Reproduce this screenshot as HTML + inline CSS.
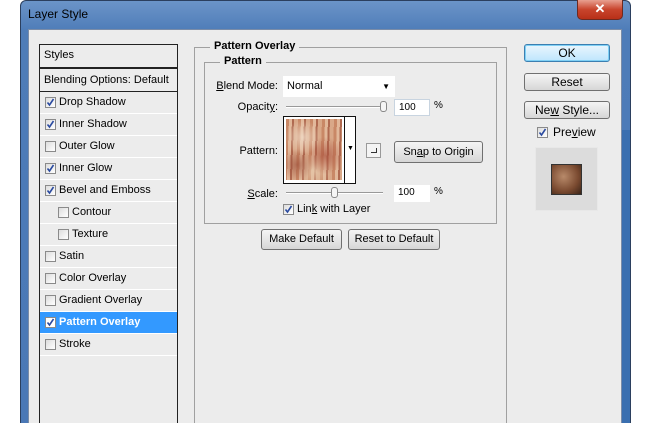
<!DOCTYPE html>
<html><head><style>
*{box-sizing:border-box;margin:0;padding:0}
html,body{width:650px;height:423px;overflow:hidden}
body{background:#fff;position:relative;font-family:"Liberation Sans",sans-serif;font-size:11px;color:#000;white-space:nowrap}
.a{position:absolute}
.frame{left:20px;top:0;width:611px;height:423px;background:linear-gradient(#6b94c8,#4e7cb8 30px,#4a78b6);border-radius:6px 6px 0 0;border:1px solid #2b3f5e;border-bottom:none}
.inner{left:28px;top:29px;width:594px;height:394px;background:#ececec;border:1px solid #7a8ca8;border-bottom:none}
.title{left:28px;top:7px;font-size:12px;color:#000}
.close{left:577px;top:0;width:46px;height:20px;background:linear-gradient(#e8a090,#c8442c 50%,#b83018);border:1px solid #6d2a20;border-top:none;border-radius:0 0 5px 5px;color:#fff;font-weight:bold;text-align:center;font-size:13px;line-height:18px}
.panel{left:39px;top:44px;width:139px;height:379px;border:1px solid #222;border-bottom:none;background:#ececec}
.row{position:absolute;left:0;width:137px;height:22px;border-bottom:1px solid #fff;line-height:21px;padding-left:19px}
.cb{position:absolute;left:5px;top:5px;width:11px;height:11px;border:1px solid #8a8a8a;background:linear-gradient(135deg,#ddd,#fff)}
.cb svg{position:absolute;left:0;top:0;display:block}
.btn{position:absolute;border:1px solid #707070;border-radius:3px;background:linear-gradient(#f4f4f4,#e6e6e6 50%,#d6d6d6);text-align:center;font-size:11px}
.fs{position:absolute;border:1px solid #a0a0a0}
.lg{position:absolute;background:#ececec;font-weight:bold;padding:0 4px;font-size:11px}
.lbl{position:absolute;text-align:right;font-size:11px}
.inp{position:absolute;background:#fff;border:1px solid #c8d4e0;padding-left:4px;font-size:10px;line-height:15px}
.sl{position:absolute;height:2px;border-top:1px solid #999;border-bottom:1px solid #fff}
.th{position:absolute;width:7px;height:11px;border:1px solid #888;border-radius:3px;background:#f5f5f5}
</style></head><body>
<svg width="0" height="0" style="position:absolute"><defs><symbol id="ck" viewBox="0 0 9 9"><path d="M1.5 4.5 L3.5 7 L7.5 1" fill="none" stroke="#2a4aa0" stroke-width="1.6"/></symbol></defs></svg>
<div class="a frame"></div>
<div class="a title">Layer Style</div>
<div class="a close">✕</div>
<div class="a inner"></div>
<div class="a panel">
 <div class="row" style="top:0;padding-left:4px;border-bottom:2px solid #222;height:24px">Styles</div>
 <div class="row" style="top:25px;padding-left:4px;border-bottom:1px solid #222">Blending Options: Default</div>
 <div class="row" style="top:47px"><span class="cb"><svg width="9" height="9"><use href="#ck"/></svg></span>Drop Shadow</div>
 <div class="row" style="top:69px"><span class="cb"><svg width="9" height="9"><use href="#ck"/></svg></span>Inner Shadow</div>
 <div class="row" style="top:91px"><span class="cb"></span>Outer Glow</div>
 <div class="row" style="top:113px"><span class="cb"><svg width="9" height="9"><use href="#ck"/></svg></span>Inner Glow</div>
 <div class="row" style="top:135px"><span class="cb"><svg width="9" height="9"><use href="#ck"/></svg></span>Bevel and Emboss</div>
 <div class="row" style="top:157px;padding-left:32px"><span class="cb" style="left:18px"></span>Contour</div>
 <div class="row" style="top:179px;padding-left:32px"><span class="cb" style="left:18px"></span>Texture</div>
 <div class="row" style="top:201px"><span class="cb"></span>Satin</div>
 <div class="row" style="top:223px"><span class="cb"></span>Color Overlay</div>
 <div class="row" style="top:245px"><span class="cb"></span>Gradient Overlay</div>
 <div class="row" style="top:267px;background:#3399ff;color:#fff;font-weight:bold"><span class="cb" style="background:#fff"><svg width="9" height="9"><use href="#ck"/></svg></span>Pattern Overlay</div>
 <div class="row" style="top:289px"><span class="cb"></span>Stroke</div>
</div>
<div class="fs" style="left:194px;top:47px;width:313px;height:390px"></div>
<div class="lg" style="left:210px;top:40px">Pattern Overlay</div>
<div class="fs" style="left:204px;top:62px;width:293px;height:162px"></div>
<div class="lg" style="left:220px;top:55px">Pattern</div>
<div class="lbl" style="left:200px;top:80px;width:78px"><u>B</u>lend Mode:</div>
<div class="inp" style="left:283px;top:76px;width:112px;height:21px;border:none;line-height:21px;font-size:11px">Normal<span style="position:absolute;right:5px;top:0;font-size:8px">▼</span></div>
<div class="lbl" style="left:200px;top:101px;width:78px">Opacit<u>y</u>:</div>
<div class="sl" style="left:286px;top:106px;width:100px"></div>
<div class="th" style="left:380px;top:101px"></div>
<div class="inp" style="left:394px;top:99px;width:36px;height:17px">100</div>
<div class="a" style="left:434px;top:100px;font-size:10px">%</div>
<div class="lbl" style="left:200px;top:145px;width:78px">Pattern:</div>
<div class="a" style="left:283px;top:116px;width:73px;height:68px;border:1px solid #111;background:#fff"></div>
<div class="a" style="left:286px;top:119px;width:56px;height:61px;background:
radial-gradient(circle at 30% 30%,rgba(240,220,200,.8),transparent 30%),
radial-gradient(circle at 70% 60%,rgba(170,80,60,.7),transparent 35%),
radial-gradient(circle at 20% 75%,rgba(150,70,50,.6),transparent 25%),
radial-gradient(circle at 50% 85%,rgba(230,200,170,.8),transparent 30%),
repeating-linear-gradient(92deg,#c98866 0 3px,#e2b89a 3px 6px,#b06a50 6px 8px,#d9a888 8px 12px)"></div>
<div class="a" style="left:344px;top:116px;width:1px;height:68px;background:#111"></div>
<div class="a" style="left:347px;top:145px;font-size:7px">▼</div>
<div class="a" style="left:366px;top:143px;width:15px;height:15px;border:1px solid #999;background:#f4f4f4"><div class="a" style="left:4px;top:4px;width:6px;height:5px;border-right:1px solid #333;border-bottom:1px solid #333"></div></div>
<div class="btn" style="left:394px;top:141px;width:89px;height:22px;line-height:20px">Sn<u>a</u>p to Origin</div>
<div class="lbl" style="left:200px;top:188px;width:78px"><u>S</u>cale:</div>
<div class="sl" style="left:286px;top:192px;width:97px"></div>
<div class="th" style="left:331px;top:187px"></div>
<div class="inp" style="left:394px;top:185px;width:36px;height:17px;border:none">100</div>
<div class="a" style="left:434px;top:186px;font-size:10px">%</div>
<div class="cb" style="left:283px;top:204px"><svg width="9" height="9"><use href="#ck"/></svg></div>
<div class="a" style="left:297px;top:203px">Lin<u>k</u> with Layer</div>
<div class="btn" style="left:261px;top:229px;width:81px;height:21px;line-height:19px">Make Default</div>
<div class="btn" style="left:348px;top:229px;width:92px;height:21px;line-height:19px">Reset to Default</div>
<div class="btn" style="left:524px;top:44px;width:86px;height:18px;line-height:16px;font-size:12px;border-color:#3c7fb1;background:linear-gradient(#eaf6fd,#bee6fd);box-shadow:0 0 0 1px #7fd0f5 inset">OK</div>
<div class="btn" style="left:524px;top:73px;width:86px;height:18px;line-height:16px;font-size:12px">Reset</div>
<div class="btn" style="left:524px;top:101px;width:86px;height:18px;line-height:16px;font-size:12px">Ne<u>w</u> Style...</div>
<div class="cb" style="left:537px;top:127px"><svg width="9" height="9"><use href="#ck"/></svg></div>
<div class="a" style="left:553px;top:125px;font-size:12px">Pre<u>v</u>iew</div>
<div class="a" style="left:535px;top:147px;width:63px;height:64px;background:#dcdcdc;border:1px solid #e8e8e8"></div>
<div class="a" style="left:551px;top:164px;width:31px;height:31px;background:radial-gradient(circle at 40% 40%,#b88a6a,#7a4a30 60%,#3a2418);border:1px solid #333"></div>
<div class="a" style="left:622px;top:130px;width:8px;height:293px;background:#3a6fb0"></div>
</body></html>
